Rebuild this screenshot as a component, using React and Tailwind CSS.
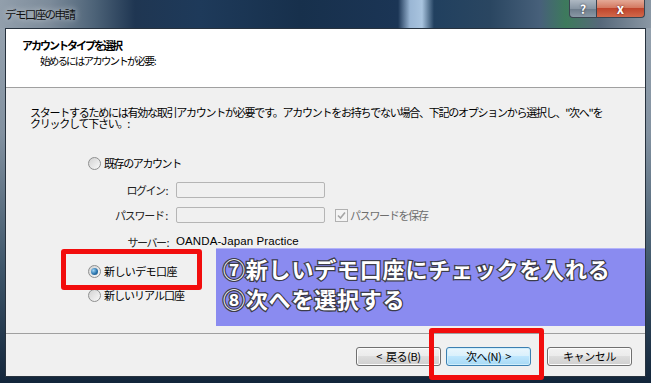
import React from 'react';

// Win7 style radio button
const Radio = ({ checked }) => (
  <span className="flex h-[13px] w-[13px] shrink-0 items-center justify-center rounded-full border border-[#8e8f8f] bg-[linear-gradient(135deg,#d2d2d2,#f9f9f9)]">
    {checked && (
      <span className="h-[7px] w-[7px] rounded-full bg-[radial-gradient(circle_at_35%_35%,#9fd4f5,#2a74ad_55%,#174c7a_100%)]" />
    )}
  </span>
);

const Button = ({ children, primary }) => (
  <button
    className={
      primary
        ? 'flex h-[19px] w-[85px] items-center justify-center gap-[4px] rounded-[3px] border border-[#3c7fb1] bg-[linear-gradient(180deg,#eaf6fd_0%,#d9f0fc_49%,#bee6fd_50%,#a7d9f5_100%)] text-[11px] leading-none tracking-[-0.4px] text-black shadow-[inset_0_0_0_1px_#cfeefc]'
        : 'flex h-[19px] w-[85px] items-center justify-center gap-[4px] rounded-[3px] border border-[#707070] bg-[linear-gradient(180deg,#f2f2f2_0%,#ebebeb_49%,#dddddd_50%,#cfcfcf_100%)] text-[11px] leading-none tracking-[-0.4px] text-black shadow-[inset_0_0_0_1px_#fcfcfc]'
    }
  >
    {children}
  </button>
);

const Field = () => (
  <div className="ml-[9px] h-[16px] w-[149px] rounded-[2px] border border-[#b5b5b5] bg-[#f0f0f0]" />
);

const App = () => {
  return (
    <div className="relative h-[383px] w-[651px] overflow-hidden bg-[linear-gradient(180deg,#9aa6b2_0%,#8291a0_35%,#3e566a_70%,#12253a_100%)] font-['Noto_Sans_CJK_JP',sans-serif] text-black">
      {/* Title bar */}
      <div className="flex h-[28px] bg-[linear-gradient(90deg,#929fac_0px,#7c8b9a_50px,#4c6277_95px,#1f3652_135px,#1e3a5a_200px,#17304c_300px,#1b3555_398px,#9ab6d4_410px,#a9c4df_422px,#21405f_434px,#2a4661_490px,#47607a_540px,#3d7a5c_566px,#56687a_600px,#8a97a4_651px)]">
        <div className="pl-[5px] pt-[7px] text-[11.5px] leading-[14px] tracking-[-1.6px] text-[#111] [text-shadow:0_0_6px_rgba(255,255,255,0.75)]">
          デモ口座の申請
        </div>
        <div className="flex-1" />
        <div className="mr-[6px] flex h-[18px]">
          <div className="flex w-[28px] items-center justify-center rounded-bl-[4px] border border-t-0 border-[#3a4450] bg-[linear-gradient(180deg,#aeb8c2_0%,#8896a4_50%,#6c7b8a_51%,#8a98a6_100%)] text-[12px] font-bold leading-none text-white [text-shadow:0_0_2px_#223]">
            ?
          </div>
          <div className="flex w-[48px] items-center justify-center rounded-br-[4px] border border-l-0 border-t-0 border-[#3a4450] bg-[linear-gradient(180deg,#e4a996_0%,#d47a62_45%,#c0452c_50%,#d2684a_100%)] text-[13px] font-bold leading-none text-white [text-shadow:0_0_2px_#511]">
            x
          </div>
        </div>
      </div>

      {/* Client area */}
      <div className="mx-[5px] flex h-[349px] flex-col border border-[#27323e]">
        {/* Header */}
        <div className="h-[59px] border-b border-[#a0a0a0] bg-white pl-[16px] pt-[10px]">
          <div className="text-[11px] font-bold leading-[12px] tracking-[-2px]">アカウントタイプを選択</div>
          <div className="mt-[4px] pl-[18px] text-[10.5px] leading-[12px] tracking-[-1.8px]">始めるにはアカウントが必要 :</div>
        </div>

        {/* Body */}
        <div className="flex-1 bg-[#f0f0f0]">
          <div className="pl-[24px] pt-[19px] text-[11px] leading-[11px] tracking-[-1.25px]">
            <div className="whitespace-nowrap">
              スタートするためには有効な取引アカウントが必要です。アカウントをお持ちでない場合、下記のオプションから選択し、"次へ"を
            </div>
            <div className="whitespace-nowrap">クリックして下さい。:</div>
          </div>

          <div className="mt-[26px] flex h-[16px] items-center pl-[82px]">
            <Radio />
            <span className="ml-[3px] text-[11px] tracking-[-1.4px]">既存のアカウント</span>
          </div>

          <div className="mt-[11px] flex h-[16px] items-center">
            <span className="w-[161px] text-right text-[11px] tracking-[-1.5px] text-[#222]">ログイン :</span>
            <Field />
          </div>

          <div className="mt-[9px] flex h-[16px] items-center">
            <span className="w-[161px] text-right text-[11px] tracking-[-1.2px] text-[#222]">パスワード :</span>
            <Field />
            <span className="ml-[10px] flex h-[13px] w-[13px] items-center justify-center border border-[#b1b1b1] bg-[#f4f4f4]">
              <svg width="9" height="9" viewBox="0 0 9 9">
                <path d="M1 4.5 L3.5 7 L8 1.5" fill="none" stroke="#a5a5a5" strokeWidth="1.6" />
              </svg>
            </span>
            <span className="ml-[2px] text-[11px] tracking-[-1.3px] text-[#6d6d6d]">パスワードを保存</span>
          </div>

          <div className="mt-[11px] flex h-[16px] items-center">
            <span className="w-[162px] text-right text-[11px] tracking-[-1.5px] text-[#222]">サーバー :</span>
            <span className="ml-[8px] font-['Liberation_Sans',sans-serif] text-[11.5px] tracking-[0.1px]">OANDA-Japan Practice</span>
          </div>

          <div className="mt-[13px] flex h-[16px] items-center pl-[82px]">
            <Radio checked />
            <span className="ml-[3px] text-[11px] tracking-[-0.6px]">新しいデモ口座</span>
          </div>

          <div className="mt-[8px] flex h-[16px] items-center pl-[82px]">
            <Radio />
            <span className="ml-[3px] text-[11px] tracking-[-1px]">新しいリアル口座</span>
          </div>
        </div>

        {/* Footer */}
        <div className="flex h-[43px] justify-end border-t border-[#a0a0a0] bg-[#f0f0f0] pr-[13px] pt-[13px]">
          <Button>
            <span>&lt;</span>
            <span>戻る(B)</span>
          </Button>
          <div className="ml-[5px]">
            <Button primary>
              <span>次へ(N)</span>
              <span>&gt;</span>
            </Button>
          </div>
          <div className="ml-[16px]">
            <Button>キャンセル</Button>
          </div>
        </div>
      </div>

      {/* Annotation overlays */}
      <div className="absolute left-[216px] top-[248px] h-[78px] w-[429px] border-t border-[#b4b4fa] bg-[#8a8bf0] pl-[7px] pt-[4px] text-[22px] font-bold leading-[30px] tracking-[0.8px] text-white [-webkit-text-stroke:2.5px_#3c3c4a] [paint-order:stroke_fill]">
        <div>⑦新しいデモ口座にチェックを入れる</div>
        <div>⑧次へを選択する</div>
      </div>
      <div className="absolute left-[61px] top-[249px] h-[41px] w-[141px] rounded-[3px] border-[5px] border-[#f20d0d]" />
      <div className="absolute left-[429px] top-[328px] h-[52px] w-[115px] rounded-[3px] border-[5px] border-[#f20d0d]" />
    </div>
  );
};

export default App;
